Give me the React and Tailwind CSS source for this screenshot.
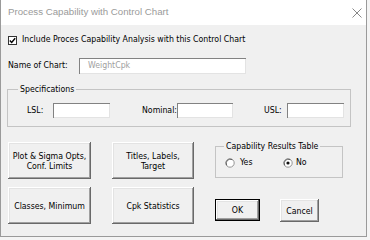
import React from "react";

const btn3d =
  "bg-[#f0f0f0] shadow-[inset_-1px_-1px_0_#696969,inset_1px_1px_0_#ffffff,inset_-2px_-2px_0_#a0a0a0,inset_2px_2px_0_#e3e3e3]";
const sunken =
  "bg-white shadow-[inset_1px_1px_0_#828282,inset_-1px_-1px_0_#e3e3e3]";

function Btn({ className = "", children }) {
  return (
    <div
      className={`flex items-center justify-center text-center leading-[10px] text-black ${btn3d} ${className}`}
    >
      <div>{children}</div>
    </div>
  );
}

function Radio({ checked }) {
  return (
    <svg width="10" height="10" viewBox="0 0 10 10" className="shrink-0">
      <circle cx="5" cy="5" r="4.2" fill="#ffffff" stroke="#8a8a8a" strokeWidth="0.9" />
      <path d="M1.6 7.2 A4.2 4.2 0 0 1 7.2 1.6" fill="none" stroke="#555" strokeWidth="0.9" />
      {checked && <circle cx="5" cy="5" r="1.6" fill="#111" />}
    </svg>
  );
}

export default function App() {
  return (
    <div
      className="w-[370px] h-[240px] bg-[#f4f4f4] text-[8.7px] text-black overflow-hidden"
      style={{ fontFamily: '"DejaVu Sans Condensed", "Liberation Sans", Arial, sans-serif' }}
    >
      <div className="w-[367px] h-[237px] bg-[#f0f0f0] border-x border-b border-[#9a9a9a] flex flex-col">
        {/* Title bar */}
        <div className="h-[25px] bg-white flex items-center justify-between pl-[7px] pr-[4px] shrink-0">
          <span className="text-[9.7px] text-[#9a9a9a]" style={{ fontFamily: '"Liberation Sans", Arial, sans-serif' }}>
            Process Capability with Control Chart
          </span>
          <svg width="10" height="10" viewBox="0 0 10 10">
            <path d="M0.5 0.5 L9.5 9.5 M9.5 0.5 L0.5 9.5" stroke="#7a7a7a" strokeWidth="0.9" fill="none" />
          </svg>
        </div>

        {/* Checkbox row */}
        <div className="mt-[10px] h-[10px] flex items-center pl-[7px]">
          <div className="w-[9px] h-[9px] border border-[#333] bg-white flex items-center justify-center shrink-0">
            <svg width="7" height="7" viewBox="0 0 7 7">
              <path d="M0.8 3.4 L2.7 5.4 L6.2 1.2" stroke="#000" strokeWidth="1.4" fill="none" />
            </svg>
          </div>
          <span className="ml-[5px] whitespace-nowrap">Include Proces Capability Analysis with this Control Chart</span>
        </div>

        {/* Name of chart */}
        <div className="mt-[13px] h-[16px] flex items-center pl-[7px]">
          <span className="w-[71px] whitespace-nowrap">Name of Chart:</span>
          <div className={`w-[167px] h-[16px] flex items-center pl-[9px] text-[#a0a0a0] ${sunken}`}>WeightCpk</div>
        </div>

        {/* Specifications */}
        <fieldset className="mt-[10px] ml-[6px] w-[344px] border border-[#c4c4c4] pt-[9px] pb-[8px]">
          <legend className="ml-[10px] px-[2px] leading-[10px]">Specifications</legend>
          <div className="flex items-center h-[15px] pl-[19px]">
            <span className="w-[26px]">LSL:</span>
            <div className={`w-[57px] h-[15px] ${sunken}`} />
            <span className="ml-[32px] w-[35px] whitespace-nowrap">Nominal:</span>
            <div className={`w-[56px] h-[15px] ${sunken}`} />
            <span className="ml-[31px] w-[23px]">USL:</span>
            <div className={`w-[57px] h-[15px] ${sunken}`} />
          </div>
        </fieldset>

        {/* Bottom area */}
        <div className="mt-[15px] flex pl-[7px]">
          <div className="grid grid-cols-[83px_82px] auto-rows-[37px] gap-x-[21px] gap-y-[8px]">
            <Btn>
              Plot &amp; Sigma Opts,
              <br />
              Conf. Limits
            </Btn>
            <Btn>
              Titles, Labels,
              <br />
              Target
            </Btn>
            <Btn>Classes, Minimum</Btn>
            <Btn>Cpk Statistics</Btn>
          </div>

          <div className="ml-[21px] flex flex-col">
            <fieldset className="w-[128px] border border-[#c4c4c4] pt-[8px] pb-[9px]">
              <legend className="ml-[8px] px-[2px] leading-[8px] whitespace-nowrap">Capability Results Table</legend>
              <div className="flex items-center h-[10px] pl-[9px]">
                <div className="w-[58px] flex items-center">
                  <Radio />
                  <span className="ml-[5px]">Yes</span>
                </div>
                <div className="flex items-center">
                  <Radio checked />
                  <span className="ml-[3px]">No</span>
                </div>
              </div>
            </fieldset>
            <div className="mt-[21px] flex items-start">
              <Btn className="w-[45px] h-[22px] border border-black">OK</Btn>
              <Btn className="ml-[20px] w-[39px] h-[23px]">Cancel</Btn>
            </div>
          </div>
        </div>
      </div>
    </div>
  );
}
